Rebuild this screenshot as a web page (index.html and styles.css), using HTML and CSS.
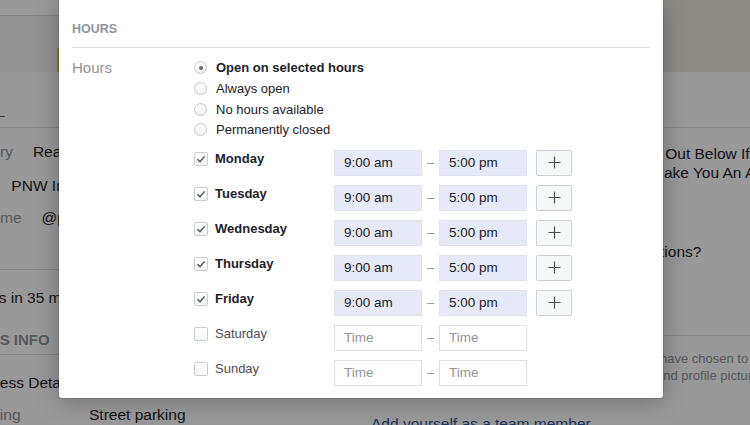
FILE: index.html
```html
<!DOCTYPE html>
<html>
<head>
    <meta charset="UTF-8">
    <title>Edit Hours</title>
    <link rel="stylesheet" href="styles.css">
</head>
<body>

<div class="page">
    <div class="top-band">
        <div class="tb-left">
            <div class="tb-strip"></div>
            <div class="tb-fill"><span class="tb-button"></span></div>
        </div>
        <div class="tb-right"></div>
    </div>

    <div class="page-body">
        <div class="left-col">
            <div class="intro"><span class="intro-dash">–</span></div>
            <div class="about">
                <div class="about-row"><span class="lbl">Category</span><span>Real Estate</span></div>
                <div class="about-row"><span class="lbl">Name</span><span>PNW Investment Properties</span></div>
                <div class="about-row"><span class="lbl">Username</span><span>@pnwinvestments</span></div>
            </div>
            <div class="response">Typically replies in 35 minutes</div>
            <div class="section-head">BUSINESS INFO</div>
            <div class="details-title">Business Details</div>
            <div class="detail-row"><span class="detail-lbl">Parking</span><span>Street parking</span></div>
        </div>

        <div class="right-col">
            <div class="promo-top"></div>
            <div class="promo-line one">Check Out Below If You'd Like</div>
            <div class="promo-line two">Make You An Account</div>
            <div class="promo-line three">Questions?</div>
            <div class="promo-divider"></div>
            <div class="note one">have chosen to show their name</div>
            <div class="note two">and profile picture</div>
            <div class="team-link">Add yourself as a team member</div>
        </div>
    </div>

    <div class="overlay"></div>

    <div class="modal">
        <div class="section-title">HOURS</div>
        <div class="field">
            <div class="field-label">Hours</div>
            <div class="field-body">
                <div class="radio-row selected"><span class="radio"></span>Open on selected hours</div>
                <div class="radio-row"><span class="radio"></span>Always open</div>
                <div class="radio-row"><span class="radio"></span>No hours available</div>
                <div class="radio-row"><span class="radio"></span>Permanently closed</div>

                <div class="days">
                    <div class="day checked">
                        <div class="day-check"><span class="checkbox"><svg width="12" height="12" viewBox="0 0 12 12"><polyline points="2.5,6.2 5,8.7 9.6,3.4" /></svg></span>Monday</div>
                        <div class="time filled">9:00 am</div><span class="dash">–</span><div class="time filled">5:00 pm</div>
                        <div class="add"><svg width="13" height="13" viewBox="0 0 13 13"><path d="M6.5 0.5v12M0.5 6.5h12" /></svg></div>
                    </div>
                    <div class="day checked">
                        <div class="day-check"><span class="checkbox"><svg width="12" height="12" viewBox="0 0 12 12"><polyline points="2.5,6.2 5,8.7 9.6,3.4" /></svg></span>Tuesday</div>
                        <div class="time filled">9:00 am</div><span class="dash">–</span><div class="time filled">5:00 pm</div>
                        <div class="add"><svg width="13" height="13" viewBox="0 0 13 13"><path d="M6.5 0.5v12M0.5 6.5h12" /></svg></div>
                    </div>
                    <div class="day checked">
                        <div class="day-check"><span class="checkbox"><svg width="12" height="12" viewBox="0 0 12 12"><polyline points="2.5,6.2 5,8.7 9.6,3.4" /></svg></span>Wednesday</div>
                        <div class="time filled">9:00 am</div><span class="dash">–</span><div class="time filled">5:00 pm</div>
                        <div class="add"><svg width="13" height="13" viewBox="0 0 13 13"><path d="M6.5 0.5v12M0.5 6.5h12" /></svg></div>
                    </div>
                    <div class="day checked">
                        <div class="day-check"><span class="checkbox"><svg width="12" height="12" viewBox="0 0 12 12"><polyline points="2.5,6.2 5,8.7 9.6,3.4" /></svg></span>Thursday</div>
                        <div class="time filled">9:00 am</div><span class="dash">–</span><div class="time filled">5:00 pm</div>
                        <div class="add"><svg width="13" height="13" viewBox="0 0 13 13"><path d="M6.5 0.5v12M0.5 6.5h12" /></svg></div>
                    </div>
                    <div class="day checked">
                        <div class="day-check"><span class="checkbox"><svg width="12" height="12" viewBox="0 0 12 12"><polyline points="2.5,6.2 5,8.7 9.6,3.4" /></svg></span>Friday</div>
                        <div class="time filled">9:00 am</div><span class="dash">–</span><div class="time filled">5:00 pm</div>
                        <div class="add"><svg width="13" height="13" viewBox="0 0 13 13"><path d="M6.5 0.5v12M0.5 6.5h12" /></svg></div>
                    </div>
                    <div class="day">
                        <div class="day-check"><span class="checkbox"></span>Saturday</div>
                        <div class="time empty">Time</div><span class="dash">–</span><div class="time empty">Time</div>
                    </div>
                    <div class="day">
                        <div class="day-check"><span class="checkbox"></span>Sunday</div>
                        <div class="time empty">Time</div><span class="dash">–</span><div class="time empty">Time</div>
                    </div>
                </div>
            </div>
        </div>
    </div>
</div>

</body>
</html>
```

FILE: styles.css
```css
body {
    margin: 0;
    font-family: "Liberation Sans", Arial, sans-serif;
    color: #1d2129;
    overflow: hidden;
}
.page {
    position: relative;
    width: 750px;
    height: 425px;
    overflow: hidden;
    background: #fff;
}

/* page behind the dialog */
.top-band {
    display: flex;
    height: 72px;
}
.tb-left {
    width: 59px;
    display: flex;
    flex-direction: column;
}
.tb-strip {
    height: 15px;
    background: #fff;
    border-bottom: 1px solid #d9d9d9;
}
.tb-fill {
    flex: 1;
    display: flex;
    justify-content: flex-end;
    align-items: flex-end;
    background: #f4f4f4;
}
.tb-button {
    width: 2px;
    height: 24px;
    background: #e9cf5a;
}
.tb-right {
    flex: 1;
    background: #efe9e0;
}
.page-body {
    display: flex;
    font-size: 15.5px;
}
.left-col {
    width: 360px;
    flex-shrink: 0;
    white-space: nowrap;
}
.intro {
    height: 21px;
    padding-top: 34px;
    border-bottom: 1px solid #dddfe2;
}
.intro-dash {
    display: block;
    margin-left: -4px;
    line-height: 18px;
    color: #4b4f56;
}
.about {
    padding: 14px 0 41px;
    border-bottom: 1px solid #dddfe2;
}
.about-row {
    display: flex;
    gap: 20px;
    line-height: 20px;
    margin-left: -50px;
}
.about-row + .about-row {
    margin-top: 14px;
}
.about-row:last-child {
    margin-top: 12px;
}
.lbl, .detail-lbl {
    color: #90949c;
}
.response {
    margin: 18px 0 0 -103px;
    line-height: 20px;
}
.section-head {
    margin: 22px 0 0 0;
    padding: 0 0 4px 0;
    text-indent: -67px;
    line-height: 20px;
    font-size: 15px;
    font-weight: bold;
    color: #90949c;
    border-bottom: 1px solid #dddfe2;
}
.details-title {
    margin: 18px 0 0 -39px;
    line-height: 20px;
}
.detail-row {
    display: flex;
    margin: 12px 0 0 -32px;
    line-height: 20px;
}
.detail-lbl {
    width: 121px;
}
.right-col {
    flex: 1;
    white-space: nowrap;
}
.promo-top {
    height: 55px;
    border-bottom: 1px solid #dddfe2;
}
.promo-line {
    line-height: 19px;
}
.promo-line.one {
    margin: 15.5px 0 0 257px;
}
.promo-line.two {
    margin-left: 291px;
}
.promo-line.three {
    margin: 60.5px 0 0 263px;
    line-height: 20px;
}
.promo-divider {
    margin-top: 73px;
    border-top: 1px solid #dddfe2;
}
.note {
    font-size: 13px;
    line-height: 17px;
    color: #90949c;
}
.note.one {
    margin: 13.5px 0 0 300px;
}
.note.two {
    margin-left: 296px;
}
.team-link {
    margin: 30px 0 0 11px;
    line-height: 20px;
    color: #365899;
}
.overlay {
    position: absolute;
    top: 0;
    left: 0;
    right: 0;
    bottom: 0;
    background: rgba(0, 0, 0, 0.4);
}

/* dialog */
.modal {
    position: absolute;
    top: 0;
    left: 59px;
    width: 604px;
    height: 398px;
    box-sizing: border-box;
    padding: 0 13px;
    background: #fff;
    border-radius: 0 0 3px 3px;
    box-shadow: 0 2px 26px rgba(0, 0, 0, 0.3), 0 0 0 1px rgba(0, 0, 0, 0.1);
}
.section-title {
    padding: 21px 0 10px;
    line-height: 16px;
    font-size: 12.5px;
    font-weight: bold;
    color: #90949c;
    border-bottom: 1px solid #dadde1;
}
.field {
    display: flex;
}
.field-label {
    width: 122px;
    padding-top: 9.5px;
    line-height: 20.7px;
    font-size: 15px;
    color: #90949c;
}
.field-body {
    padding-top: 9.5px;
    font-size: 13px;
}
.radio-row {
    display: flex;
    align-items: center;
    height: 20.7px;
    color: #1d2129;
}
.radio-row.selected {
    font-weight: bold;
}
.radio {
    position: relative;
    width: 13px;
    height: 13px;
    box-sizing: border-box;
    margin-right: 9px;
    border: 1px solid #c4c7cc;
    border-radius: 50%;
    background: linear-gradient(#fff, #f1f2f4);
}
.radio-row.selected .radio::after {
    content: "";
    position: absolute;
    top: 3.5px;
    left: 3.5px;
    width: 4px;
    height: 4px;
    border-radius: 50%;
    background: #606770;
}
.days {
    margin-top: 9.7px;
}
.day {
    display: flex;
    align-items: flex-start;
    height: 26px;
    margin-bottom: 9px;
}
.day-check {
    display: flex;
    align-items: center;
    width: 140px;
    height: 18px;
    color: #4b4f56;
}
.day.checked .day-check {
    font-weight: bold;
    color: #1d2129;
}
.checkbox {
    display: flex;
    align-items: center;
    justify-content: center;
    width: 14px;
    height: 14px;
    box-sizing: border-box;
    margin-right: 7px;
    border: 1px solid #c9ccd1;
    border-radius: 2px;
    background: linear-gradient(#fff, #f5f6f7);
}
.checkbox svg polyline {
    fill: none;
    stroke: #4b4f56;
    stroke-width: 1.4;
}
.time {
    width: 88px;
    height: 26px;
    box-sizing: border-box;
    padding-left: 9px;
    line-height: 24px;
    font-size: 13.5px;
    border: 1px solid #dddfe2;
}
.time.filled {
    background: #e6e9f7;
    border-color: #dfe2ef;
    color: #1d2129;
}
.time.empty {
    background: #fff;
    color: #90949c;
}
.dash {
    width: 17px;
    line-height: 26px;
    text-align: center;
    color: #90949c;
}
.add {
    display: flex;
    align-items: center;
    justify-content: center;
    width: 36px;
    height: 26px;
    box-sizing: border-box;
    margin-left: 9px;
    border: 1px solid #ccd0d5;
    border-radius: 2px;
    background: #f6f7f9;
}
.add svg path {
    stroke: #4b4f56;
    stroke-width: 1.2;
}
```
